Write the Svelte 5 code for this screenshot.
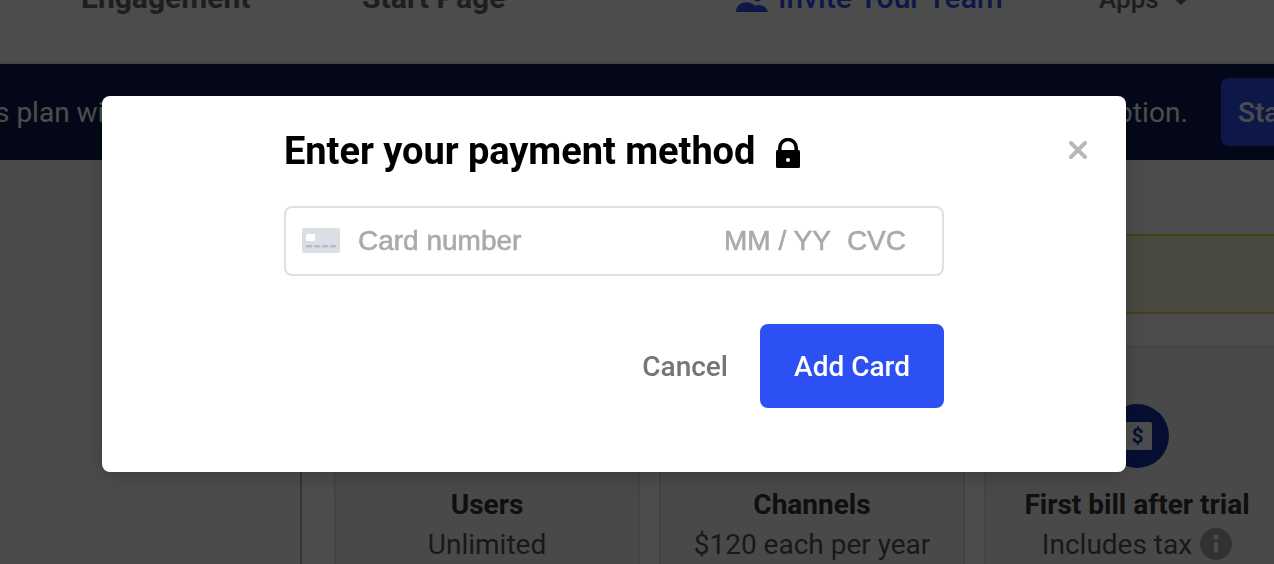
<script>
  const nav = ['Engagement', 'Start Page'];
  const cards = [
    { title: 'Users', detail: 'Unlimited' },
    { title: 'Channels', detail: '$120 each per year' },
    { title: 'First bill after trial', detail: 'Includes tax', bill: true }
  ];
</script>

<div class="screen">
  <header class="topbar">
    <span class="nav first">{nav[0]}</span>
    <span class="nav second">{nav[1]}</span>
    <span class="invite">
      <svg width="32" height="26" viewBox="0 0 32 26" fill="currentColor">
        <circle cx="10.5" cy="6" r="6" />
        <circle cx="21.5" cy="10.500" r="5" />
        <path d="M0 26c0-6 4.500-9.800 10.500-9.800 3.600 0 6.300 1.300 8.200 3.600 1.200-.5 2.500-.8 3.800-.8 4.500 0 8 2.500 9.500 7z" />
      </svg>
      <span>Invite Your Team</span>
    </span>
    <span class="apps">
      <span>Apps</span>
      <svg width="18" height="14" viewBox="0 0 18 14" fill="none" stroke="currentColor" stroke-width="5"><path d="M2 3 9 9.500 16 3" /></svg>
    </span>
  </header>

  <div class="banner">
    <span>s plan wi</span>
    <span class="tail">ption.</span>
    <button class="start">Sta</button>
  </div>

  <div class="body">
    <aside></aside>
    <main>
      <div class="notice"></div>
      <div class="cards">
        {#each cards as card}
          <section class="card">
            <div class="badge-row">
              {#if card.bill}
                <svg width="64" height="64" viewBox="0 0 64 64">
                  <circle cx="32" cy="32" r="32" fill="#1733a6" />
                  <rect x="17" y="18" width="30" height="28" rx="1.500" fill="#fff" />
                  <text x="32.500" y="39" text-anchor="middle" font-size="21" font-weight="700" fill="#1733a6">$</text>
                </svg>
              {/if}
            </div>
            <h2>{card.title}</h2>
            <p>
              <span>{card.detail}</span>
              {#if card.bill}
                <svg width="32" height="32" viewBox="0 0 32 32">
                  <circle cx="16" cy="16" r="16" fill="#a6a6a6" />
                  <circle cx="16" cy="9" r="2.600" fill="#f8f8f8" />
                  <path d="M14 13.700h4v9.300a2 2 0 0 1-4 0z" fill="#f8f8f8" />
                </svg>
              {/if}
            </p>
          </section>
        {/each}
      </div>
    </main>
  </div>
</div>

<div class="overlay">
  <div class="modal" role="dialog" aria-modal="true">
    <div class="content">
      <div class="heading">
        <h1>Enter your payment method</h1>
        <svg width="24" height="30" viewBox="0 0 24 30">
          <path d="M3.800 13V9.700a8.200 8.200 0 0 1 16.400 0V13" fill="none" stroke="#000" stroke-width="3.500" />
          <rect y="12" width="24" height="18" rx="1.500" />
          <circle cx="12" cy="22" r="2" fill="#fff" />
        </svg>
      </div>
      <div class="field">
        <svg width="38" height="25" viewBox="0 0 38 25">
          <rect width="38" height="25" rx="2" fill="#dcdee5" />
          <rect x="4" y="6" width="9" height="7" rx="1" fill="#fff" />
          <path d="M5 18.200h4.300M13 18.200h4.300M21 18.200h4.300M29 18.200h4" stroke="#b7bbc9" stroke-width="2.400" stroke-linecap="round" />
        </svg>
        <span class="number">Card number</span>
        <span class="expiry">MM / YY</span>
        <span class="cvc">CVC</span>
      </div>
      <div class="actions">
        <button class="cancel">Cancel</button>
        <button class="add">Add Card</button>
      </div>
    </div>
    <svg class="close" width="20" height="20" viewBox="0 0 20 20"><path d="M3 3l14 14M17 3l-14 14" stroke="#b8b8b8" stroke-width="4" stroke-linecap="round" /></svg>
  </div>
</div>

<style>
  :global(body) { overflow: hidden; }
  * { box-sizing: border-box; }
  button { border: 0; padding: 0; font: inherit; color: inherit; background: none; }
  svg { display: block; flex: none; }
  .screen, .overlay { width: 1274px; height: 564px; overflow: hidden; font-family: Roboto, sans-serif; font-size: 28px; white-space: nowrap; }
  .screen { background: #fff; display: flex; flex-direction: column; }
  .topbar { flex: none; height: 128px; margin-top: -64px; border-bottom: 2px solid #e8e8e8; display: flex; align-items: center; color: #666; line-height: 34px; }
  .nav { font-weight: 700; font-size: 30px; padding-bottom: 2px; }
  .first { width: 281px; margin-left: 81px; }
  .second { width: 374px; letter-spacing: .1px; }
  .invite { width: 363px; display: flex; align-items: center; gap: 10px; color: #2c50f2; font-weight: 500; font-size: 30px; }
  .invite span { padding-bottom: 2px; }
  .apps { display: flex; align-items: center; gap: 13px; font-size: 26px; font-weight: 500; }
  .apps span { padding-bottom: 1px; }
  .banner { flex: none; height: 96px; background: #0c1a50; color: #fff; display: flex; align-items: center; }
  .banner > span { margin-left: -5px; letter-spacing: 0; }
  .banner .tail { margin-left: auto; letter-spacing: .1px; }
  .start { width: 110px; height: 68px; margin: 0 -57px 0 33px; padding-left: 17px; border-radius: 8px; background: #2c50f2; text-align: left; font-weight: 500; }
  .body { flex: 1; min-height: 0; display: flex; }
  aside { flex: none; width: 302px; border-right: 2px solid #b5b5b5; background: #fafafa; }
  main { flex: none; width: 1020px; padding: 74px 32px 0; }
  .notice { height: 80px; border: 2px solid #e0d255; background: #f7f4d2; }
  .cards { margin-top: 32px; display: grid; grid-template-columns: repeat(3, 306px); gap: 19px; }
  .card { height: 260px; border: 2px solid #e2e2e2; background: #f4f4f4; text-align: center; color: #333; }
  .badge-row { height: 120px; padding-top: 56px; display: flex; justify-content: center; }
  h2 { margin: 17px 0 0; font-size: 28px; line-height: 40px; font-weight: 700; }
  p { margin: 0; font-size: 28px; line-height: 40px; display: flex; align-items: center; justify-content: center; gap: 8px; color: #555; }
  p svg { margin-bottom: 2px; }
  .overlay { position: fixed; inset: 0; background: rgba(0, 0, 0, .7); padding: 96px 0 0 102px; }
  .modal { position: relative; width: 1024px; height: 376px; border-radius: 8px; background: #fff; box-shadow: 0 4px 24px rgba(0, 0, 0, .2); padding: 32px 182px; }
  .heading { height: 46px; display: flex; align-items: center; gap: 21px; }
  h1 { margin: 0; font-size: 38px; font-weight: 700; line-height: 46px; letter-spacing: -.04px; }
  .heading svg { margin-top: 4px; }
  .content { width: 660px; }
  .field { margin-top: 32px; height: 70px; border: 2px solid #e0e0e0; border-radius: 8px; display: flex; align-items: center; padding: 0 36px 0 16px; color: #aaa; font: 28px "Liberation Sans", Arial, sans-serif; -webkit-text-stroke: .6px #aaa; }
  .field svg { margin-bottom: 2px; }
  .number { margin-left: 18px; }
  .expiry { margin-left: auto; margin-right: 16px; }
  .actions { margin-top: 48px; display: flex; justify-content: flex-end; align-items: center; font-weight: 500; }
  .cancel { margin-right: 32px; color: #757575; }
  .add { width: 184px; height: 84px; border-radius: 8px; background: #2c50f4; color: #fff; }
  .close { position: absolute; top: 44px; right: 38px; }
</style>
